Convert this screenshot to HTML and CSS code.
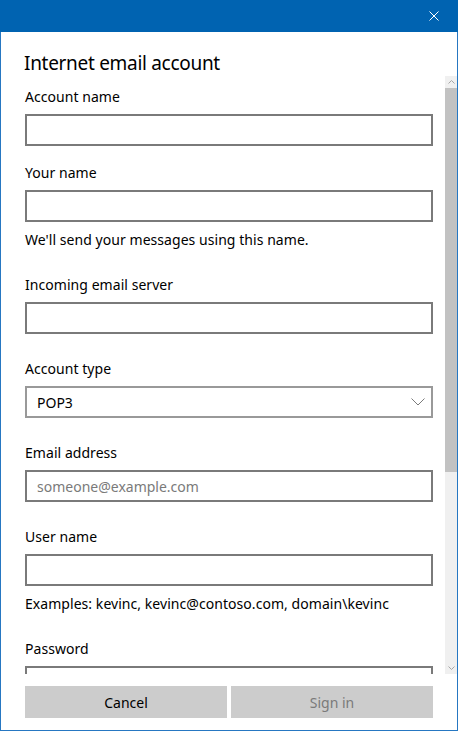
FILE: index.html
```html
<!DOCTYPE html>
<html lang="en">
<head>
<meta charset="utf-8">
<title>Internet email account</title>
<link rel="stylesheet" href="styles.css">
</head>
<body>
<div class="window">
  <div class="titlebar">
    <div class="close" aria-label="Close">
      <svg width="10" height="10" viewBox="0 0 10 10"><path d="M0.5 0.5 L9.5 9.5 M9.5 0.5 L0.5 9.5" stroke="#fff" stroke-width="1" fill="none"/></svg>
    </div>
  </div>
  <div class="frame">
    <div class="header"><h1 class="title">Internet email account</h1></div>
    <div class="scroll">
      <div class="content">
        <div class="field first">
          <div class="label">Account name</div>
          <input class="input" type="text">
        </div>
        <div class="field tight">
          <div class="label">Your name</div>
          <input class="input" type="text">
        </div>
        <div class="helper">We'll send your messages using this name.</div>
        <div class="field after-helper">
          <div class="label">Incoming email server</div>
          <input class="input" type="text">
        </div>
        <div class="field">
          <div class="label">Account type</div>
          <div class="select">
            <span>POP3</span>
            <svg width="14" height="8" viewBox="0 0 14 8"><path d="M0.5 0.5 L7 7 L13.5 0.5" stroke="#7a7a7a" stroke-width="1" fill="none"/></svg>
          </div>
        </div>
        <div class="field">
          <div class="label">Email address</div>
          <input class="input" type="text" placeholder="someone@example.com">
        </div>
        <div class="field">
          <div class="label">User name</div>
          <input class="input" type="text">
        </div>
        <div class="helper">Examples: kevinc, kevinc@contoso.com, domain\kevinc</div>
        <div class="field after-helper">
          <div class="label">Password</div>
          <input class="input" type="password">
        </div>
      </div>
      <div class="scrollbar">
        <div class="sb-btn">
          <svg width="7" height="4" viewBox="0 0 7 4"><path d="M0.5 3.5 L3.5 0.5 L6.5 3.5" stroke="#a6a6a6" stroke-width="1" fill="none"/></svg>
        </div>
        <div class="sb-thumb"></div>
        <div class="sb-track"></div>
        <div class="sb-btn">
          <svg width="7" height="4" viewBox="0 0 7 4"><path d="M0.5 0.5 L3.5 3.5 L6.5 0.5" stroke="#a6a6a6" stroke-width="1" fill="none"/></svg>
        </div>
      </div>
    </div>
    <div class="footer">
      <button class="btn">Cancel</button>
      <button class="btn disabled">Sign in</button>
    </div>
  </div>
</div>
</body>
</html>
```
FILE: styles.css
```css
html, body {
  margin: 0;
  padding: 0;
  background: #fff;
}
body {
  font-family: "Noto Sans", "Open Sans", sans-serif;
  color: #000;
}
.window {
  width: 458px;
  height: 731px;
  display: flex;
  flex-direction: column;
}
.titlebar {
  height: 32px;
  flex-shrink: 0;
  background: #0063b1;
  display: flex;
  justify-content: flex-end;
}
.close {
  width: 48px;
  display: flex;
  align-items: center;
  justify-content: center;
}
.close svg { display: block; }
.frame {
  flex: 1;
  min-height: 0;
  display: flex;
  flex-direction: column;
  border: 1px solid #2677c2;
  border-top: 0;
}
.header {
  height: 44px;
  flex-shrink: 0;
  box-sizing: border-box;
  padding: 19px 0 0 23px;
}
.title {
  margin: 0;
  font-size: 19px;
  font-weight: normal;
  line-height: 24px;
  letter-spacing: -0.3px;
}
.scroll {
  height: 598px;
  flex-shrink: 0;
  display: flex;
}
.content {
  flex: 1;
  overflow: hidden;
  padding: 10px 12px 0 24px;
}
.field {
  display: flex;
  flex-direction: column;
  gap: 7px;
  margin-top: 24px;
}
.field.first { margin-top: 0; }
.field.tight { margin-top: 16px; }
.field.after-helper { margin-top: 24px; }
.label, .helper {
  font-size: 14px;
  line-height: 20px;
  letter-spacing: 0.05px;
}
.label { padding-top: 1px; }
.helper { margin-top: 8px; }
.input {
  box-sizing: border-box;
  width: 408px;
  height: 32px;
  margin: 0;
  border: 2px solid #7a7a7a;
  padding: 0 10px;
  font-family: inherit;
  font-size: 14px;
  color: #000;
  background: #fff;
  outline: none;
  flex-shrink: 0;
}
.input::placeholder { color: #7a7a7a; }
.select {
  box-sizing: border-box;
  width: 408px;
  height: 32px;
  border: 2px solid #999;
  padding: 0 6px 0 10px;
  display: flex;
  align-items: center;
  justify-content: space-between;
  font-size: 14px;
}
.select svg { display: block; }
.scrollbar {
  width: 12px;
  flex-shrink: 0;
  background: #f0f0f0;
  display: flex;
  flex-direction: column;
}
.sb-btn {
  height: 12px;
  flex-shrink: 0;
  display: flex;
  align-items: center;
  justify-content: center;
}
.sb-btn svg { display: block; }
.sb-thumb {
  height: 384px;
  flex-shrink: 0;
  background: #c2c2c2;
}
.sb-track { flex: 1; }
.footer {
  flex: 1;
  display: flex;
  gap: 4px;
  padding: 12px 24px;
}
.btn {
  flex: 1;
  height: 32px;
  border: 0;
  margin: 0;
  padding: 0;
  background: #cccccc;
  font-family: inherit;
  font-size: 14px;
  color: #000;
}
.btn.disabled { color: #7a7a7a; }
```
